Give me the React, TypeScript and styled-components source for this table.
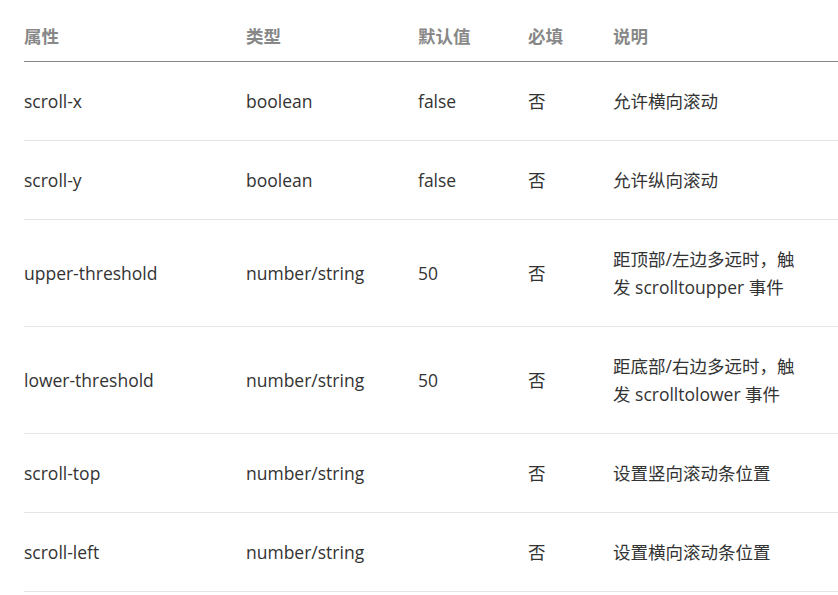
import styled, { createGlobalStyle } from 'styled-components';

const GlobalStyle = createGlobalStyle`
  html, body {
    margin: 0;
    padding: 0;
    background: #fff;
    overflow: hidden;
  }
`;

const Page = styled.section`
  padding-left: 24px;
  font-family: 'Open Sans', 'Noto Sans CJK SC', sans-serif;
  font-size: 17.5px;
  line-height: 28px;
  color: #333;
`;

const Table = styled.table`
  width: 814px;
  border-collapse: collapse;
  table-layout: fixed;
`;

const HeadCell = styled.th<{ $w?: number }>`
  width: ${(p) => (p.$w ? `${p.$w}px` : 'auto')};
  text-align: left;
  font-weight: 700;
  color: #888;
  padding: 22px 0 11px;
  border-bottom: 1px solid #888;
`;

const Row = styled.tr`
  border-bottom: 1px solid #e5e5e5;
`;

const Cell = styled.td<{ $last?: boolean }>`
  padding: 25px ${(p) => (p.$last ? '36px' : '0')} 25px 0;
  vertical-align: middle;
`;

const columns = [
  { label: '属性', w: 222 },
  { label: '类型', w: 172 },
  { label: '默认值', w: 110 },
  { label: '必填', w: 85 },
  { label: '说明' },
];

const rows = [
  ['scroll-x', 'boolean', 'false', '否', '允许横向滚动'],
  ['scroll-y', 'boolean', 'false', '否', '允许纵向滚动'],
  ['upper-threshold', 'number/string', '50', '否', '距顶部/左边多远时，触发 scrolltoupper 事件'],
  ['lower-threshold', 'number/string', '50', '否', '距底部/右边多远时，触发 scrolltolower 事件'],
  ['scroll-top', 'number/string', '', '否', '设置竖向滚动条位置'],
  ['scroll-left', 'number/string', '', '否', '设置横向滚动条位置'],
];

const App = () => {
  return (
    <Page>
      <GlobalStyle />
      <Table>
        <thead>
          <tr>
            {columns.map((c) => (
              <HeadCell key={c.label} $w={c.w}>
                {c.label}
              </HeadCell>
            ))}
          </tr>
        </thead>
        <tbody>
          {rows.map((r) => (
            <Row key={r[0]}>
              {r.map((v, i) => (
                <Cell key={i} $last={i === 4}>
                  {v}
                </Cell>
              ))}
            </Row>
          ))}
        </tbody>
      </Table>
    </Page>
  );
};
export default App;
